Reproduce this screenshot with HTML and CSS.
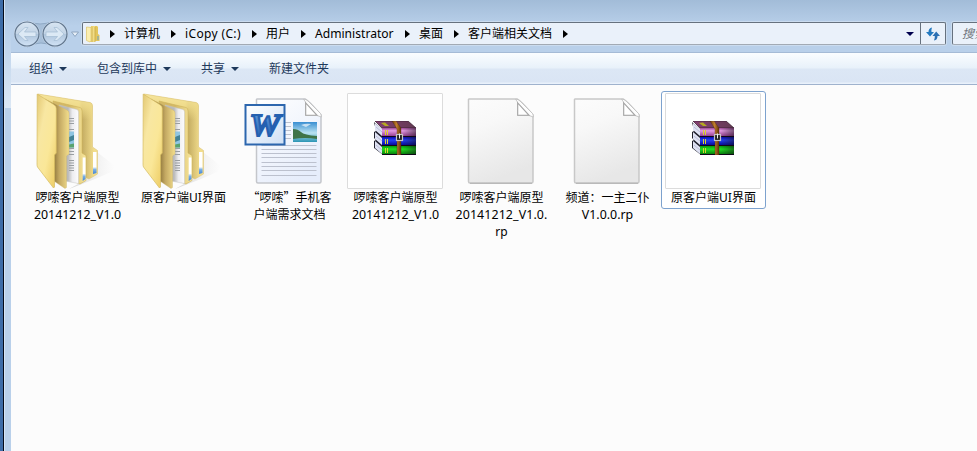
FILE: index.html
```html
<!DOCTYPE html>
<html lang="zh-CN">
<head>
<meta charset="utf-8">
<title>客户端相关文档</title>
<link rel="stylesheet" href="styles.css">
</head>
<body>
<svg class="defs" aria-hidden="true">
  <defs>
    <linearGradient id="flap" x1="0" y1="0" x2="1" y2="1"><stop offset="0" stop-color="#e3c873"/><stop offset=".3" stop-color="#f8e7a2"/><stop offset=".6" stop-color="#fae798"/><stop offset="1" stop-color="#ecca60"/></linearGradient>
    <linearGradient id="mid" gradientUnits="userSpaceOnUse" x1="26" y1="0" x2="40" y2="0"><stop offset="0" stop-color="#9c8345"/><stop offset=".3" stop-color="#c3a862"/><stop offset="1" stop-color="#f3de8c"/></linearGradient>
    <linearGradient id="back" gradientUnits="userSpaceOnUse" x1="50" y1="0" x2="65" y2="0"><stop offset="0" stop-color="#f4e192"/><stop offset=".2" stop-color="#c4ac62"/><stop offset="1" stop-color="#f2dd8c"/></linearGradient>
    <linearGradient id="third" gradientUnits="userSpaceOnUse" x1="40" y1="0" x2="56" y2="0"><stop offset="0" stop-color="#d3b866"/><stop offset="1" stop-color="#f6e49a"/></linearGradient>
    <linearGradient id="backtop" x1="0" y1="0" x2="0" y2="1"><stop offset="0" stop-color="#f6e59c"/><stop offset=".15" stop-color="#eeda89" stop-opacity=".85"/><stop offset=".3" stop-color="#eeda89" stop-opacity="0"/></linearGradient>
    <linearGradient id="leaf" gradientUnits="userSpaceOnUse" x1="39" y1="0" x2="50" y2="0"><stop offset="0" stop-color="#b9b9b9"/><stop offset=".4" stop-color="#ededf0"/><stop offset="1" stop-color="#fdfdff"/></linearGradient>
    <linearGradient id="shade" x1="0" y1="0" x2="1" y2="0"><stop offset="0" stop-color="#999" stop-opacity=".4"/><stop offset="1" stop-color="#ccc" stop-opacity="0"/></linearGradient>
    <linearGradient id="tab" x1="0" y1="0" x2="0" y2="1"><stop offset=".68" stop-color="#fff"/><stop offset=".8" stop-color="#79afe8"/><stop offset="1" stop-color="#4484d2"/></linearGradient>
    <linearGradient id="sheet" x1="0" y1="0" x2=".3" y2="1"><stop offset="0" stop-color="#fcfcfc"/><stop offset=".35" stop-color="#f8f8f8"/><stop offset="1" stop-color="#e7e7e7"/></linearGradient>
    <linearGradient id="docsheet" x1="0" y1="0" x2=".6" y2="1"><stop offset="0" stop-color="#fff"/><stop offset="1" stop-color="#e6edfb"/></linearGradient>
    <linearGradient id="wbox" x1="0" y1="0" x2="1" y2="1"><stop offset="0" stop-color="#fff"/><stop offset="1" stop-color="#cfe0f5"/></linearGradient>
    <linearGradient id="wink" x1="0" y1="0" x2="0" y2="1"><stop offset="0" stop-color="#6aa3e0"/><stop offset="1" stop-color="#1d58ad"/></linearGradient>
    <linearGradient id="sky" x1="0" y1="0" x2="0" y2="1"><stop offset="0" stop-color="#3a8fd2"/><stop offset=".55" stop-color="#b9e2f1"/><stop offset="1" stop-color="#2a94b4"/></linearGradient>
    <linearGradient id="purple" x1="0" y1="0" x2="0" y2="1"><stop offset="0" stop-color="#a04a9a"/><stop offset=".3" stop-color="#e39be3"/><stop offset="1" stop-color="#8a2e80"/></linearGradient>
    <linearGradient id="blue" x1="0" y1="0" x2="0" y2="1"><stop offset="0" stop-color="#0909b0"/><stop offset=".35" stop-color="#2440f5"/><stop offset="1" stop-color="#00008a"/></linearGradient>
    <linearGradient id="green" x1="0" y1="0" x2="0" y2="1"><stop offset="0" stop-color="#079a0d"/><stop offset=".35" stop-color="#20e020"/><stop offset="1" stop-color="#037008"/></linearGradient>
    <linearGradient id="cover" x1="0" y1="0" x2="1" y2="0"><stop offset="0" stop-color="#853f73"/><stop offset="1" stop-color="#633a52"/></linearGradient>
    <linearGradient id="bookend" x1="0" y1="0" x2="1" y2="0"><stop offset=".6" stop-color="#222" stop-opacity="0"/><stop offset="1" stop-color="#111" stop-opacity=".5"/></linearGradient>
    <linearGradient id="strap" x1="0" y1="0" x2="1" y2="0"><stop offset="0" stop-color="#6a3a0c"/><stop offset=".5" stop-color="#c17d2c"/><stop offset="1" stop-color="#633507"/></linearGradient>
    <linearGradient id="orb" x1="0" y1="0" x2="0" y2="1"><stop offset="0" stop-color="#d9e6f3"/><stop offset=".48" stop-color="#c3d4e6"/><stop offset=".52" stop-color="#b0c6dd"/><stop offset="1" stop-color="#d3e4f6"/></linearGradient>

    <symbol id="folder" viewBox="0 0 96 96">
      <path d="M58 86 68 59 86 73 82 79 66 86 40 96z" fill="url(#shade)"/>
      <path d="M9 1 61 9.500Q63.500 10 63.500 13V54L68.500 57.500V81L60 86 53 83 27 70z" fill="url(#back)"/>
      <path d="M9 1 61 9.500Q63.500 10 63.500 13V54L68.500 57.500V81L60 86 53 83 27 70z" fill="url(#backtop)" stroke="#dcc57a" stroke-width=".6"/>
      <path d="M64 59h3.500V80l-3.500 1z" fill="url(#tab)"/>
      <path d="M24 8 51 14.500Q53 15 53 18V60L57 62.500V87.500L51 91 46 89z" fill="url(#third)" stroke="#cdb158" stroke-width=".6"/>
      <path d="M30 12 48 16.500Q49.500 17 49.500 19V90.500L36 88z" fill="url(#leaf)" stroke="#c7c7c7" stroke-width=".5"/>
      <path d="M40 25.500h5m-5 2.500h5m-5 2.500h5m-5 6h5m-5 19h5m-5 3h5m-5 3h5m-5 6h5m-5 2.500h5m-5 2.500h5m-5 2.500h5m-5 2.500h5" stroke="#9a9ea2" stroke-width="1"/>
      <path d="M40 38.500h5v16h-5z" fill="#8fc5e2"/><path d="M40 44l5-2v5l-5 2z" fill="#438296"/><path d="M40 51.500l5-1v4h-5z" fill="#59a36e"/>
      <path d="M53.700 64.500H56.500V86l-2.800 2z" fill="url(#tab)"/>
      <path d="M16 6 38 17Q40 18 40 20V61L37.500 63V94.500L36 95.500 22 86z" fill="url(#mid)" stroke="#cdb56b" stroke-width=".4"/>
      <path d="M8.200 1 25.500 12Q27.300 13.200 27.300 15.500V60L25.500 62V94L24.500 95 8.500 74Q8 73 8 71z" fill="url(#flap)" stroke="#d6bb61" stroke-width=".7"/>
    </symbol>
    <symbol id="fold" viewBox="0 0 96 96">
      <path d="M62.500 6.200Q65 6 67 8L79.500 20.500Q80.500 22 80.300 24L76 22.500H64.500V9z" fill="#fdfdfd" stroke="#bdbdbd" stroke-width=".8"/>
      <path d="M64.700 10V22.300H76z" fill="#fff" stroke="#a5a5a5" stroke-width="1.100"/>
    </symbol>
    <symbol id="page" viewBox="0 0 96 96">
      <path d="M16 6H64Q68 8 80 22V88.500Q80 90 78.500 90H17Q15.500 90 15.500 88.500V6.500z" fill="url(#sheet)" stroke="#c8c8c8" stroke-width="1.500"/>
      <path d="M17 90.300H79" stroke="#b2b2b2"/>
      <use href="#fold"/>
    </symbol>
    <symbol id="word" viewBox="0 0 96 96">
      <path d="M16 6H64Q68 8 80 22V88.500Q80 90 78.500 90H17Q15.500 90 15.500 88.500V6.500z" fill="url(#docsheet)" stroke="#c4c6cb" stroke-width="1.500"/>
      <use href="#fold"/>
      <path d="M44 29.500h6m-6 4h6m-6 4h6m-6 4h6m-6 4h6M20.500 52.500h55m-55 4h55m-55 4h55m-55 4h55m-55 5h55m-55 4h55m-55 4h55m-55 5h55" stroke="#bcc1ce" stroke-width="1"/>
      <path d="M52 29h24v20H52z" fill="url(#sky)"/><path d="M52 36q5 0 8 3t16 4v3q-12-2-24 0z" fill="#3f7448"/><path d="M60 32q5-2 10-1l-5 3z" fill="#fff" opacity=".65"/>
      <rect x="4.500" y="12" width="39" height="39.500" fill="url(#wbox)" stroke="#2c66ae" stroke-width="2"/>
      <text x="24" y="43" class="word-mark" textLength="31" lengthAdjust="spacingAndGlyphs">W</text>
    </symbol>
    <symbol id="rar" viewBox="0 0 42 34">
      <path d="M0 1 9 9V34L0 27V20L2 19 0 17V11L2 10z" fill="#20202c"/>
      <path d="M1 2 8 8V15L1 9zM1 11 8 17V24L1 18zM1 20 8 26V33L1 27z" fill="#dfe2f3"/>
      <path d="M2 6 8 11M2 15 8 20M2 24 8 29" stroke="#a3a6c4" stroke-width=".6"/>
      <path d="M1 0H34L42 7H8z" fill="url(#cover)" stroke="#32182b" stroke-width=".7"/>
      <rect x="8" y="7" width="34" height="9" fill="url(#purple)"/><rect x="8" y="16" width="34" height="9" fill="url(#blue)"/><rect x="8" y="25" width="34" height="9" fill="url(#green)"/>
      <rect x="8" y="7" width="34" height="27" fill="url(#bookend)"/>
      <path d="M8 15.500H42M8 24.500H42M8 33.500H42" stroke="#100818" stroke-width="1"/>
      <path d="M11.500 9v5m2-5v5M11.500 18v5m2-5v5M11.500 27v5m2-5v5" stroke="#ded42d" stroke-width="1"/>
      <path d="M7 2 11 1.500 15 5 11 5z" fill="#b6aa20"/>
      <path d="M18 0H22L27 7V34H23V8z" fill="url(#strap)" stroke="#42240a" stroke-width=".3"/>
      <rect x="22.500" y="13.500" width="6" height="6" fill="#222" stroke="#c4c4c4" stroke-width="1.200"/><path d="M25.500 12.500v5" stroke="#eee" stroke-width="1"/>
    </symbol>
  </defs>
</svg>

<div class="desktop">
  <div class="window">
    <div class="side"><div class="side-glow"></div></div>
    <div class="main">
      <header class="navbar">
        <svg class="history" width="68" height="30" viewBox="0 0 68 30">
          <path d="M15 2Q22 5 28 5T43 2 V28Q36 24 29 24T15 28z" fill="#a7bfd9" stroke="#8fa9c5"/>
          <g fill="url(#orb)"><circle cx="15" cy="15" r="12.700" stroke="#d2e1f1" /><circle cx="43" cy="15" r="12.700" stroke="#d2e1f1"/></g>
          <g fill="none" stroke="#61768e" stroke-width="1.200"><circle cx="15" cy="15" r="12"/><circle cx="43" cy="15" r="12"/></g>
          <path d="M6 15 13 8.500h3L12.500 13H24v4.500H12.500l3.500 4h-3z" fill="#dce9f5" stroke="#a4bbd3" stroke-width=".7"/>
          <path d="M52 15 45 8.500h-3L45.500 13H34v4.500H45.500l-3.500 4h3z" fill="#dce9f5" stroke="#a4bbd3" stroke-width=".7"/>
          <path d="M59.500 13h7L63 17.500z" fill="#e6eef7" stroke="#8ea5c0"/>
        </svg>
        <div class="address">
          <svg class="mini-folder" width="14" height="18" viewBox="0 0 14 18">
            <path d="M5 1h6l1 1v7l1.500 1v6H5z" fill="#e3c65d"/><path d="M4 2 9 1v16H4z" fill="#f2dd86"/><path d="M6 2v15M9 2v15" stroke="#c8a947" stroke-width=".8"/><path d="M.5 2 5 2.500v13L4 17 .5 15.500z" fill="#fbeeb0" stroke="#dfc568" stroke-width=".7"/><path d="M12 11v4" stroke="#6ba2c9"/>
          </svg>
          <nav class="crumbs">
            <span class="crumb">计算机</span>
            <span class="crumb drive">iCopy (C:)</span>
            <span class="crumb">用户</span>
            <span class="crumb admin">Administrator</span>
            <span class="crumb">桌面</span>
            <span class="crumb">客户端相关文档</span>
            <span class="crumb"></span>
          </nav>
          <span class="caret dropdown"></span>
          <span class="refresh">
            <svg width="14" height="14" viewBox="0 0 14 14"><path d="M6 .5Q2.500 1 2.500 5H0L4 9.500 8 5H5.500Q5.200 2.500 6 .5z" fill="#2379bf"/><path d="M8 13.500Q11.500 13 11.500 9H14L10.200 4.500 6.500 9H8.800Q9 11.500 8 13.500z" fill="#2c70b4"/></svg>
          </span>
        </div>
        <div class="search">搜索</div>
      </header>
      <div class="toolbar">
        <span class="tool">组织<i class="caret"></i></span>
        <span class="tool">包含到库中<i class="caret"></i></span>
        <span class="tool">共享<i class="caret"></i></span>
        <span class="tool">新建文件夹</span>
      </div>
      <main class="files">
        <div class="file"><svg class="icon"><use href="#folder"/></svg><div class="name">啰嗦客户端原型<br><span class="latin">20141212_V1.0</span></div></div>
        <div class="file"><svg class="icon"><use href="#folder"/></svg><div class="name">原客户端UI界面</div></div>
        <div class="file"><svg class="icon"><use href="#word"/></svg><div class="name"><span class="quoted">“啰嗦”</span>手机客<br>户端需求文档</div></div>
        <div class="file"><div class="icon thumb"><svg width="42" height="34"><use href="#rar"/></svg></div><div class="name">啰嗦客户端原型<br><span class="latin">20141212_V1.0</span></div></div>
        <div class="file"><svg class="icon"><use href="#page"/></svg><div class="name">啰嗦客户端原型<br><span class="latin wide">20141212_V1.0.</span><br>rp</div></div>
        <div class="file"><svg class="icon"><use href="#page"/></svg><div class="name">频道<span class="colon">：</span>一主二仆<br><span class="latin">V1.0.0.rp</span></div></div>
        <div class="file selected"><div class="icon thumb"><svg width="42" height="34"><use href="#rar"/></svg></div><div class="name">原客户端UI界面</div></div>
      </main>
    </div>
  </div>
</div>
</body>
</html>
```
FILE: styles.css
```css
* { box-sizing: border-box; }
body {
  margin: 0;
  overflow: hidden;
  font: 12px/17px "Noto Sans", "Noto Sans CJK SC", sans-serif;
  color: #000;
}
.defs { position: absolute; width: 0; height: 0; }
.desktop { height: 451px; padding-left: 3px; background: #3d6ca7; }
.window {
  display: flex;
  height: 100%;
  border-left: 1px solid #050b18;
  background: linear-gradient(#a2bcd8 0, #b9d0ea 26px, #b9d0ea);
}
.side { flex: 0 0 7px; border-left: 1px solid #d5e5f5; }
.side-glow { height: 108px; background: linear-gradient(transparent 30px, #dce8f5); }
.main { flex: 1; min-width: 0; }
.navbar { display: flex; height: 52px; padding-top: 22px; overflow: hidden; }
.history { flex: none; margin: -3px 2px 0 1px; }
.address {
  flex: 0 0 864px;
  display: flex;
  align-items: center;
  height: 23px;
  border: 1px solid #66717e;
  border-bottom-color: #a2aab4;
  border-radius: 2px;
  background: #eaf1fa;
  box-shadow: 0 0 0 1px #cbdcef;
}
.mini-folder { margin: 0 10px 0 3px; }
.crumbs { display: flex; flex: 1; height: 21px; line-height: 20px; }
.crumb { display: flex; align-items: center; margin-right: 11px; white-space: nowrap; }
.crumb::before {
  content: "";
  margin-right: 10px;
  border-left: 5px solid #000;
  border-top: 4px solid transparent;
  border-bottom: 4px solid transparent;
}
.crumb:not(:last-child)::before { margin-right: 9px; }
.drive { width: 70px; letter-spacing: .35px; }
.admin { width: 93px; font-size: 12.1px; }
.caret {
  flex: none;
  border-top: 4px solid #1e395b;
  border-left: 4px solid transparent;
  border-right: 4px solid transparent;
}
.dropdown { margin-right: 6px; border-top-color: #00004d; }
.refresh {
  display: flex;
  align-items: center;
  justify-content: center;
  flex: 0 0 25px;
  height: 21px;
  border-left: 1px solid #66717e;
}
.search {
  flex: 0 0 100px;
  height: 23px;
  margin-left: 6px;
  padding: 2px 9px;
  border: 1px solid #66717e;
  border-bottom-color: #a2aab4;
  border-radius: 2px;
  background: #eaf1fa;
  box-shadow: 0 0 0 1px #cbdcef;
  color: #717780;
  font-style: italic;
}
.toolbar {
  display: flex;
  gap: 30px;
  height: 33px;
  padding: 0 18px;
  border-top: 1px solid #a5bbd6;
  border-bottom: 1px solid #9fb2cd;
  background: linear-gradient(#fafdff 0, #e8f1fa 15px, #dce7f5 16px, #dae5f4 29px, #e9f1fb 30px);
  color: #1e395b;
}
.tool { display: flex; align-items: center; gap: 6px; white-space: nowrap; }
.files {
  display: flex;
  align-items: flex-start;
  gap: 1px;
  height: 366px;
  padding: 6px 14px;
  background: #fcfcfc;
}
.file {
  flex: 0 0 105px;
  height: 118px;
  padding: 1px 3px;
  border: 1px solid transparent;
  border-radius: 3px;
}
.selected { border-color: #7da2ce; background: #fff; }
.icon { display: block; width: 96px; height: 96px; }
.thumb {
  display: flex;
  align-items: center;
  justify-content: center;
  padding-bottom: 6px;
  border: 1px solid #dcdcdc;
  border-radius: 1px;
  background: #fff;
}
.name { text-align: center; white-space: nowrap; }
.latin { font-size: 12.4px; line-height: 16px; }
.wide { letter-spacing: .1px; }
.quoted { font-family: "Noto Sans CJK SC", sans-serif; line-height: 1; }
.colon { font-family: "Noto Sans CJK TC", sans-serif; line-height: 1; }
.colon:lang(zh) { font-feature-settings: normal; }
.word-mark {
  font: italic bold 32px "Liberation Serif", serif;
  text-anchor: middle;
  fill: url(#wink);
  stroke: #2460b0;
  stroke-width: 2px;
}
```
